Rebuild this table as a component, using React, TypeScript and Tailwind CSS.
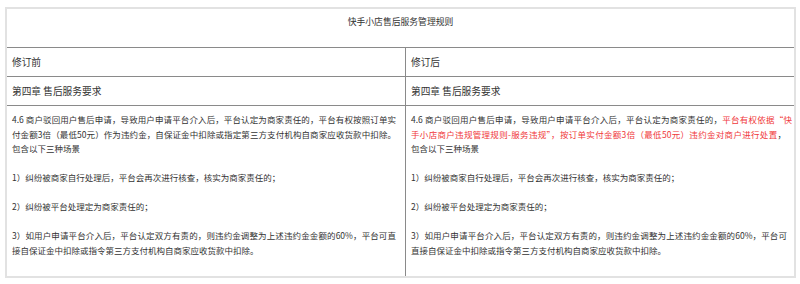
const font = { fontFamily: '"Noto Sans CJK SC", "Noto Sans", sans-serif' };

// a single rendered line; full lines are spread across their width like the original wrap
function Line({ children, w }: { children: React.ReactNode; w?: string }) {
  if (w) {
    return (
      <div className={`text-justify [text-align-last:justify] [text-justify:inter-character] ${w}`}>
        {children}
      </div>
    );
  }
  return <div className="whitespace-nowrap">{children}</div>;
}

function Row({ children }: { children: React.ReactNode }) {
  return (
    <div className="h-[29px] border-b border-[#8a8a8a] flex items-center px-[5px] text-[9.7px]">
      {children}
    </div>
  );
}

export default function App() {
  return (
    <div className="w-[800px] h-[284px] bg-white pt-[7px] pl-[5px]" style={font}>
      <div className="w-[791px] h-[271px] border-2 border-[#e2e2e2] flex flex-col text-[#333]">
        {/* Title */}
        <div className="h-[39px] shrink-0 border-b border-[#8a8a8a] text-center text-[8.8px] leading-[14px] pt-[6px]">
          快手小店售后服务管理规则
        </div>

        <div className="grid grid-cols-[399px_1fr] flex-1">
          {/* 修订前 */}
          <div className="border-r border-[#8a8a8a] flex flex-col">
            <Row>修订前</Row>
            <Row>第四章 售后服务要求</Row>
            <div className="pl-[5px] pt-[6px] text-[8.5px] leading-[14.5px]">
              <Line w="w-[384px]">
                4.6 商户驳回用户售后申请，导致用户申请平台介入后，平台认定为商家责任的，平台有权按照订单实
              </Line>
              <Line w="w-[384px]">
                付金额3倍（最低50元）作为违约金，自保证金中扣除或指定第三方支付机构自商家应收货款中扣除。
              </Line>
              <Line>包含以下三种场景</Line>
              <div className="mt-[14.5px]">
                <Line>1）纠纷被商家自行处理后，平台会再次进行核查，核实为商家责任的；</Line>
              </div>
              <div className="mt-[14.5px]">
                <Line>2）纠纷被平台处理定为商家责任的；</Line>
              </div>
              <div className="mt-[14.5px]">
                <Line w="w-[384px]">
                  3）如用户申请平台介入后，平台认定双方有责的，则违约金调整为上述违约金金额的60%，平台可直
                </Line>
                <Line>接自保证金中扣除或指令第三方支付机构自商家应收货款中扣除。</Line>
              </div>
            </div>
          </div>

          {/* 修订后 */}
          <div className="flex flex-col">
            <Row>修订后</Row>
            <Row>第四章 售后服务要求</Row>
            <div className="pl-[5px] pt-[6px] text-[8.5px] leading-[14.5px]">
              <Line w="w-[381px]">
                4.6 商户驳回用户售后申请，导致用户申请平台介入后，平台认定为商家责任的，
                <span className="text-[#f0393b]">平台有权依据“快</span>
              </Line>
              <Line w="w-[375px]">
                <span className="text-[#f0393b]">
                  手小店商户违规管理规则-服务违规”，按订单实付金额3倍（最低50元）违约金对商户进行处置
                </span>
                ，
              </Line>
              <Line>包含以下三种场景</Line>
              <div className="mt-[14.5px]">
                <Line>1）纠纷被商家自行处理后，平台会再次进行核查，核实为商家责任的；</Line>
              </div>
              <div className="mt-[14.5px]">
                <Line>2）纠纷被平台处理定为商家责任的；</Line>
              </div>
              <div className="mt-[14.5px]">
                <Line w="w-[376px]">
                  3）如用户申请平台介入后，平台认定双方有责的，则违约金调整为上述违约金金额的60%，平台可
                </Line>
                <Line>直接自保证金中扣除或指令第三方支付机构自商家应收货款中扣除。</Line>
              </div>
            </div>
          </div>
        </div>
      </div>
    </div>
  );
}
